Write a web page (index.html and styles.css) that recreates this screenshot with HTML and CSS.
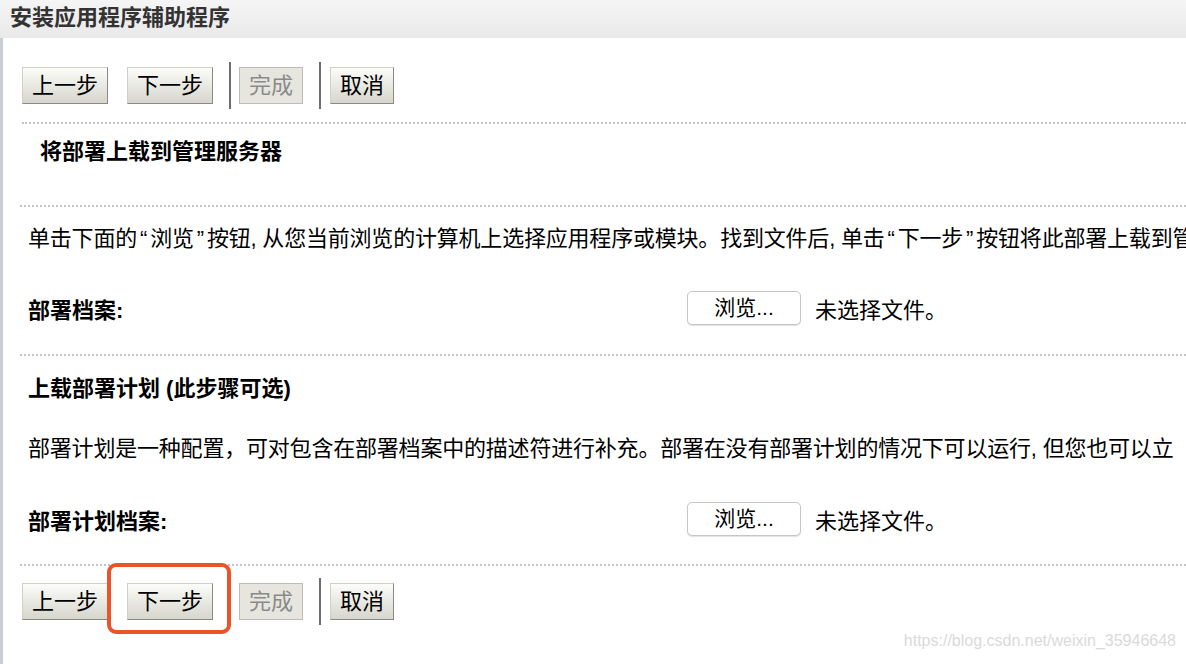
FILE: index.html
```html
<!DOCTYPE html>
<html lang="zh-CN">
<head>
<meta charset="utf-8">
<title>安装应用程序辅助程序</title>
<link rel="stylesheet" href="styles.css">
</head>
<body>
<div class="titlebar">安装应用程序辅助程序</div>
<div class="content">
  <div class="toolbar">
    <button class="btn">上一步</button>
    <button class="btn gap-a">下一步</button>
    <span class="sep gap-b"></span>
    <button class="btn btn-disabled gap-c" disabled>完成</button>
    <span class="sep gap-b"></span>
    <button class="btn gap-d">取消</button>
  </div>
  <div class="rule rule-first"></div>
  <h2 class="heading heading-main">将部署上载到管理服务器</h2>
  <div class="rule rule-2"></div>
  <p class="desc">单击下面的<span class="q">“</span>浏览<span class="q">”</span>按钮, 从您当前浏览的计算机上选择应用程序或模块。找到文件后, 单击<span class="q">“</span>下一步<span class="q">”</span>按钮将此部署上载到管理服务器。</p>
  <div class="field">
    <span class="label">部署档案:</span>
    <span class="file"><span class="browse">浏览...</span><span class="nofile">未选择文件。</span></span>
  </div>
  <div class="rule rule-3"></div>
  <h2 class="heading heading-sub">上载部署计划 (此步骤可选)</h2>
  <p class="desc desc-2">部署计划是一种配置，可对包含在部署档案中的描述符进行补充。部署在没有部署计划的情况下可以运行, 但您也可以立</p>
  <div class="field field-2">
    <span class="label">部署计划档案:</span>
    <span class="file"><span class="browse">浏览...</span><span class="nofile">未选择文件。</span></span>
  </div>
  <div class="rule rule-4"></div>
  <div class="toolbar toolbar-bottom">
    <button class="btn">上一步</button>
    <button class="btn gap-a">下一步</button>
    <span class="sep gap-b"></span>
    <button class="btn btn-disabled gap-c" disabled>完成</button>
    <span class="sep gap-b"></span>
    <button class="btn gap-d">取消</button>
  </div>
</div>
<div class="highlight"></div>
<div class="watermark">https://blog.csdn.net/weixin_35946648</div>
</body>
</html>
```

FILE: styles.css
```css
html, body {
  margin: 0;
  padding: 0;
  width: 1186px;
  height: 664px;
  overflow: hidden;
  background: #fff;
}
body {
  position: relative;
  font-family: "Liberation Sans", "Noto Sans CJK SC", sans-serif;
  color: #000;
}
.titlebar {
  height: 38px;
  box-sizing: border-box;
  padding-left: 10px;
  line-height: 36px;
  font-size: 22px;
  font-weight: 700;
  color: #333;
  background: linear-gradient(#f5f5f5, #e9e9e9);
  white-space: nowrap;
}
.content {
  border-left: 3px solid #c9ced2;
  height: 626px;
  box-sizing: border-box;
  padding-top: 24px;
}
.toolbar {
  display: flex;
  align-items: center;
  height: 47px;
  padding-left: 19px;
}
.toolbar-bottom {
  margin-top: 12px;
}
.btn {
  font-family: "Liberation Sans", "Noto Sans CJK SC", sans-serif;
  font-size: 22px;
  height: 37px;
  line-height: 35px;
  padding: 0 9px;
  margin: 0;
  border: 1px solid;
  border-color: #d0d0c9 #8a8a84 #8a8a84 #d0d0c9;
  background: linear-gradient(#fcfcf9, #d6d6cd);
  color: #000;
  box-sizing: border-box;
}
.btn-disabled {
  color: #8a8a8a;
  background: #e6e6df;
  border-color: #bdbdb6;
}
.gap-a { margin-left: 19px; }
.gap-b { margin-left: 16px; }
.gap-c { margin-left: 8px; }
.gap-d { margin-left: 9px; }
.sep {
  width: 2px;
  height: 47px;
  background: #6e6e6e;
}
.rule {
  border-top: 2px dotted #c4c4c4;
  margin-left: 17px;
}
.rule-first {
  margin-top: 13px;
  margin-left: 19px;
}
.rule-3 { margin-top: 29px; }
.rule-4 { margin-top: 28px; }
.heading {
  margin: 0;
  font-size: 22px;
  font-weight: 700;
  line-height: 30px;
  white-space: nowrap;
}
.heading-main {
  margin: 13px 0 38px 37px;
}
.heading-sub {
  margin: 18px 0 0 25px;
}
.desc {
  margin: 17px 0 0 25px;
  font-size: 22px;
  line-height: 30px;
  letter-spacing: -0.2px;
  white-space: nowrap;
  overflow: hidden;
}
.q {
  padding: 0 3px;
}
.desc-2 {
  margin-top: 30px;
}
.field {
  display: grid;
  grid-template-columns: 659px auto;
  align-items: center;
  height: 34px;
  margin-top: 37px;
  padding-left: 25px;
  font-size: 22px;
}
.field-2 {
  margin-top: 38px;
}
.label {
  font-weight: 700;
  white-space: nowrap;
}
.file {
  display: flex;
  align-items: center;
  white-space: nowrap;
}
.browse {
  width: 114px;
  height: 34px;
  box-sizing: border-box;
  border: 1px solid #c6c6c6;
  border-radius: 5px;
  box-shadow: 0 1px 1px rgba(0, 0, 0, 0.12);
  background: #fff;
  font-size: 21px;
  line-height: 32px;
  text-align: center;
}
.nofile {
  margin-left: 14px;
}
.highlight {
  position: absolute;
  left: 107px;
  top: 563px;
  width: 124px;
  height: 71px;
  box-sizing: border-box;
  border: 4px solid #ea5428;
  border-radius: 9px;
}
.watermark {
  position: absolute;
  right: 10px;
  bottom: 14px;
  font-size: 16px;
  line-height: 18px;
  color: #dadada;
  white-space: nowrap;
}
```
